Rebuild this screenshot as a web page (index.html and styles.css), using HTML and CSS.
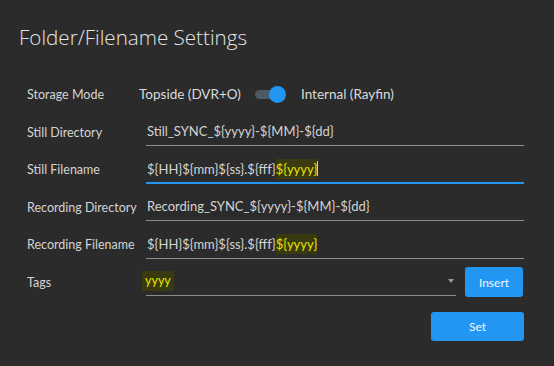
FILE: index.html
```html
<!DOCTYPE html>
<html>
<head>
	<title>Folder/Filename Settings</title>
	<link rel="stylesheet" href="styles.css">
</head>
<body>

<div class="dialog">
	<div class="dialogTitle">Folder/Filename Settings</div>

	<div class="form">
		<div class="row modeRow">
			<span class="label">Storage Mode</span>
			<span class="modeText">Topside (DVR+O)</span>
			<span class="toggle"><span class="toggleTrack"></span><span class="toggleThumb"></span></span>
			<span class="modeText">Internal (Rayfin)</span>
		</div>

		<div class="row">
			<span class="label">Still Directory</span>
			<div class="field">Still_SYNC_${yyyy}-${MM}-${dd}</div>
		</div>

		<div class="row">
			<span class="label">Still Filename</span>
			<div class="field fieldFocus">${HH}${mm}${ss}.${fff}<span class="hl">${yyyy}</span><span class="caret"></span></div>
		</div>

		<div class="row">
			<span class="label">Recording Directory</span>
			<div class="field">Recording_SYNC_${yyyy}-${MM}-${dd}</div>
		</div>

		<div class="row">
			<span class="label">Recording Filename</span>
			<div class="field">${HH}${mm}${ss}.${fff}<span class="hl">${yyyy}</span></div>
		</div>

		<div class="row">
			<span class="label">Tags</span>
			<div class="field combo"><span class="hl hlTag">yyyy</span><span class="comboArrow"></span></div>
			<button class="btn btnInsert">Insert</button>
		</div>

		<div class="actions">
			<button class="btn btnSet">Set</button>
		</div>
	</div>
</div>

</body>
</html>
```

FILE: styles.css
```css
html, body {
	margin: 0;
	padding: 0;
	background-color: #2b2b2b;
}
body {
	font-family: Lato, "Open Sans", sans-serif;
	color: #d6d6d6;
	width: 554px;
	height: 366px;
	overflow: hidden;
}
.dialogTitle {
	padding: 22px 0 0 19px;
	font-family: "Open Sans", Lato, sans-serif;
	font-size: 20.6px;
	font-weight: 300;
	line-height: 30px;
	color: #e4e4e4;
}
.form {
	padding: 28px 30px 0 27px;
	display: flex;
	flex-direction: column;
	gap: 9.5px;
}
.row {
	display: flex;
	align-items: center;
	height: 28px;
}
.modeRow {
	margin-bottom: 0.5px;
}
.label {
	width: 119px;
	flex: none;
	font-size: 12.5px;
	color: #d4d4d4;
}
.modeText {
	font-size: 13.5px;
	color: #dadada;
}
.modeRow .label {
	width: 112px;
}
.toggle {
	position: relative;
	width: 32px;
	height: 17px;
	margin: 0 14px 0 14px;
}
.toggleTrack {
	position: absolute;
	left: 0;
	top: 4px;
	width: 24px;
	height: 9px;
	border-radius: 5px;
	background-color: #4d5964;
}
.toggleThumb {
	position: absolute;
	left: 14px;
	top: 0;
	width: 17px;
	height: 17px;
	border-radius: 50%;
	background-color: #2196f3;
}
.field {
	flex: 1;
	height: 28px;
	box-sizing: border-box;
	display: flex;
	align-items: center;
	padding: 0 0 1px 1px;
	border-bottom: 1px solid #8c8c8c;
	font-size: 13px;
	color: #d4d4d4;
	white-space: nowrap;
}
.fieldFocus {
	border-bottom: 2px solid #2196f3;
	padding-bottom: 0;
}
.hl {
	background-color: #3a3a10;
	color: #e6e400;
	padding: 2px 0;
}
.hlTag {
	padding: 2px 3px 3px;
	margin-left: -5px;
	font-size: 12.5px;
}
.caret {
	display: inline-block;
	width: 1px;
	height: 15px;
	background-color: #cfcfcf;
}
.combo {
	flex: none;
	width: 310px;
}
.comboArrow {
	margin-left: auto;
	margin-right: 2px;
	width: 0;
	height: 0;
	border-left: 3.5px solid transparent;
	border-right: 3.5px solid transparent;
	border-top: 4px solid #9a9a9a;
}
.btn {
	border: none;
	border-radius: 3px;
	background-color: #2196f3;
	color: #f2f8ff;
	font-family: Lato, "Open Sans", sans-serif;
	font-size: 12px;
	padding: 0;
	cursor: pointer;
}
.btnInsert {
	width: 58px;
	height: 30px;
	margin-left: 9px;
}
.actions {
	display: flex;
	justify-content: flex-end;
	padding-top: 6px;
}
.btnSet {
	width: 93px;
	height: 29px;
}
```
